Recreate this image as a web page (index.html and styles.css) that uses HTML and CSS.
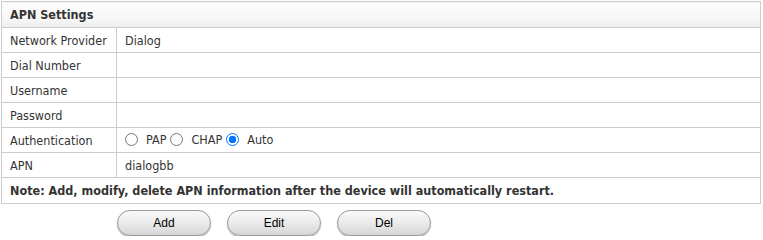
FILE: index.html
```html
<!DOCTYPE html>
<html>
<head>
<meta charset="utf-8">
<link rel="stylesheet" href="styles.css">
</head>
<body>
<div class="page">
  <table class="grid">
    <colgroup><col class="c1"><col class="c2"></colgroup>
    <tr class="head"><th colspan="2">APN Settings</th></tr>
    <tr><td>Network Provider</td><td>Dialog</td></tr>
    <tr><td>Dial Number</td><td></td></tr>
    <tr><td>Username</td><td></td></tr>
    <tr><td>Password</td><td></td></tr>
    <tr><td>Authentication</td><td class="radios"><label><span class="radio"></span>PAP</label><label><span class="radio"></span>CHAP</label><label><span class="radio on"></span>Auto</label></td></tr>
    <tr><td>APN</td><td>dialogbb</td></tr>
    <tr class="note"><td colspan="2">Note: Add, modify, delete APN information after the device will automatically restart.</td></tr>
  </table>
  <div class="actions">
    <button class="btn">Add</button>
    <button class="btn">Edit</button>
    <button class="btn">Del</button>
  </div>
</div>
</body>
</html>
```
FILE: styles.css
```css
html, body { margin: 0; padding: 0; background: #fff; }
.page { padding: 1px 2px 0 1px; font-family: "DejaVu Sans Condensed", "DejaVu Sans", sans-serif; font-size: 12.5px; color: #333; }
.grid { width: 760px; border-collapse: collapse; table-layout: fixed; }
.grid .c1 { width: 115px; }
.grid th, .grid td { border: 1px solid #cccccc; height: 24px; padding: 0 0 0 8px; text-align: left; vertical-align: middle; }
.head th { height: 25px; font-weight: bold; background: linear-gradient(#fdfdfd, #f6f6f6 70%, #ececec); }
.note td { height: 25px; font-weight: bold; }
.radios label { display: inline-flex; align-items: center; margin-right: 4px; }
.radio { width: 13px; height: 13px; border: 1px solid #767676; border-radius: 50%; display: inline-block; margin: 0 8px 0 0; box-sizing: border-box; }
.radio.on { border: 1px solid #0075ff; background: radial-gradient(circle, #0075ff 0 3.5px, #fff 4px); }
.actions { display: flex; gap: 16px; padding: 6px 0 0 116px; }
.btn { width: 94px; height: 26px; border: 1px solid #9a9a9a; border-radius: 13px; background: linear-gradient(#fafafa, #e8e8e8 55%, #d6d6d6); box-shadow: 0 1px 1px rgba(0,0,0,0.35); font-family: "Liberation Sans", Arial, sans-serif; font-size: 12px; color: #000; padding: 0; }
```
